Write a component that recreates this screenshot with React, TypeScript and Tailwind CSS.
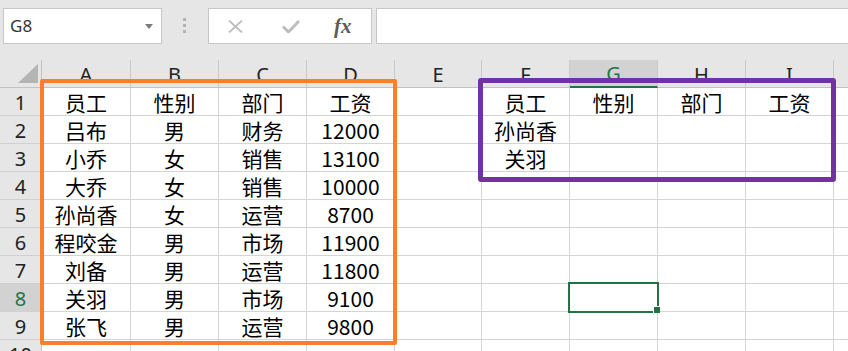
import React from "react";

const cols = ["A", "B", "C", "D", "E", "F", "G", "H", "I", ""];

const left: string[][] = [
  ["员工", "性别", "部门", "工资"],
  ["吕布", "男", "财务", "12000"],
  ["小乔", "女", "销售", "13100"],
  ["大乔", "女", "销售", "10000"],
  ["孙尚香", "女", "运营", "8700"],
  ["程咬金", "男", "市场", "11900"],
  ["刘备", "男", "运营", "11800"],
  ["关羽", "男", "市场", "9100"],
  ["张飞", "男", "运营", "9800"],
  ["", "", "", ""],
];

const right: string[][] = [
  ["员工", "性别", "部门", "工资"],
  ["孙尚香", "", "", ""],
  ["关羽", "", "", ""],
];

const cellFont = { fontFamily: '"Noto Sans CJK SC", "Noto Sans", sans-serif' };
const uiFont = { fontFamily: '"Noto Sans", "Open Sans", sans-serif' };

function rowCells(r: number) {
  const l = left[r];
  const rr = right[r] ?? ["", "", "", ""];
  return [...l, "", ...rr, ""];
}

export default function App() {
  return (
    <div className="w-[848px] h-[351px] overflow-hidden bg-white relative">
      {/* formula bar */}
      <div className="h-[60px] bg-[#e6e6e6] flex items-start pt-[8px] pl-[3px]">
        <div className="w-[159px] h-[36px] border border-[#c6c6c6] bg-white flex items-center justify-between pl-[6px] pr-[8px]">
          <span className="text-[17px] text-[#333]" style={uiFont}>G8</span>
          <svg width="8" height="5" viewBox="0 0 8 5">
            <polygon points="0,0 8,0 4,5" fill="#7a7a7a" />
          </svg>
        </div>
        <div className="ml-[21px] mt-[10px] flex flex-col gap-[3px]">
          <div className="w-[3px] h-[3px] bg-[#b3b3b3]" />
          <div className="w-[3px] h-[3px] bg-[#b3b3b3]" />
          <div className="w-[3px] h-[3px] bg-[#b3b3b3]" />
        </div>
        <div className="ml-[22px] w-[164px] h-[36px] border border-[#c6c6c6] bg-white flex items-center pl-[19px]">
          <svg width="15" height="13" viewBox="0 0 15 13">
            <path d="M1 0.5 L14 12.5 M14 0.5 L1 12.5" stroke="#bdbdbd" strokeWidth="1.8" fill="none" />
          </svg>
          <svg className="ml-[39px]" width="18" height="13" viewBox="0 0 18 13">
            <path d="M1 6.5 L6.5 12 L17 1" stroke="#bdbdbd" strokeWidth="3" fill="none" />
          </svg>
          <span
            className="ml-[34px] text-[21px] italic font-bold text-[#5c5c5c] leading-none"
            style={{ fontFamily: '"Liberation Serif", serif' }}
          >
            fx
          </span>
        </div>
        <div className="ml-[4px] flex-1 -mr-[2px] h-[36px] border border-[#c6c6c6] bg-white" />
      </div>

      {/* sheet */}
      <div className="relative">
        <div className="grid w-[922px] grid-cols-[42px_89px_88px_88px_88px_87px_88px_88px_88px_88px_88px] auto-rows-[28px]">
          <div className="bg-[#e6e6e6] border-r border-b border-[#c2c2c2] flex items-end justify-end pr-[3px] pb-[4px]">
            <svg width="20" height="19" viewBox="0 0 20 19">
              <polygon points="20,0 20,19 0,19" fill="#b4b4b4" />
            </svg>
          </div>
          {cols.map((c, i) => (
            <div
              key={i}
              className={`border-r border-[#cacaca] flex items-center justify-center pt-[2px] text-[20px] ${
                c === "G"
                  ? "bg-[#d2d2d2] text-[#217346] border-b-2 border-b-[#217346]"
                  : "bg-[#e6e6e6] text-[#222] border-b border-b-[#c2c2c2]"
              }`}
              style={uiFont}
            >
              {c}
            </div>
          ))}
          {left.map((_, r) => (
            <React.Fragment key={r}>
              <div
                className={`border-r border-r-[#c2c2c2] border-b border-b-[#d0d0d0] flex items-center justify-center pt-[2px] text-[20px] ${
                  r === 7 ? "bg-[#d2d2d2] text-[#217346]" : "bg-[#e6e6e6] text-[#222]"
                }`}
                style={uiFont}
              >
                {r + 1}
              </div>
              {rowCells(r).map((v, i) => (
                <div
                  key={i}
                  className="border-r border-b border-[#d4d4d4] flex items-center justify-center pt-[3px] text-[21px] text-black whitespace-nowrap"
                  style={cellFont}
                >
                  {v}
                </div>
              ))}
            </React.Fragment>
          ))}
        </div>

        {/* annotation boxes */}
        <div className="absolute left-[40px] top-[19px] w-[357px] h-[266px] border-4 border-[#fb7f2b] rounded-[2px]" />
        <div className="absolute left-[478px] top-[18px] w-[358px] h-[104px] border-[5px] border-[#7232a3] rounded-[3px]" />

        {/* selected cell G8 */}
        <div className="absolute left-[568px] top-[222px] w-[91px] h-[31px] border-2 border-[#217346]" />
        <div className="absolute left-[653px] top-[246px] w-[7px] h-[7px] bg-[#217346] border-l border-t border-white" />
      </div>
    </div>
  );
}
